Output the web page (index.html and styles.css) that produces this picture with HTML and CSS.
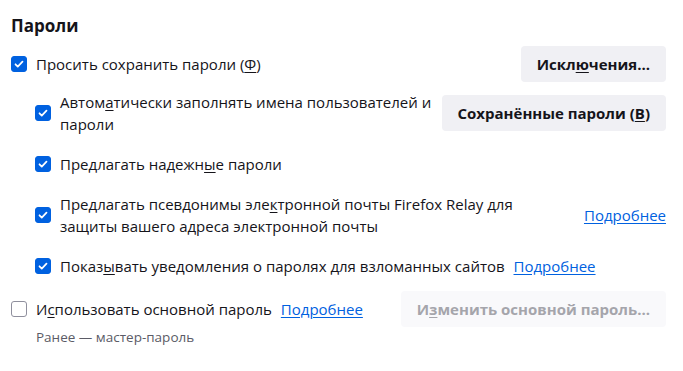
FILE: index.html
```html
<!DOCTYPE html>
<html lang="ru">
<head>
    <meta charset="UTF-8">
    <title>Пароли</title>
    <link rel="stylesheet" href="styles.css">
</head>
<body>

<div id="passwords">
    <h1>Пароли</h1>

    <div class="row">
        <label class="check">
            <span class="box on"><svg viewBox="0 0 16 16"><path d="M4 8.3l2.6 2.6L12 5.4"/></svg></span>
            <span class="txt">Просить сохранить пароли (<u>Ф</u>)</span>
        </label>
        <button class="btn">Искл<u>ю</u>чения...</button>
    </div>

    <div class="row sub">
        <label class="check">
            <span class="box on"><svg viewBox="0 0 16 16"><path d="M4 8.3l2.6 2.6L12 5.4"/></svg></span>
            <span class="txt">Автом<u>а</u>тически заполнять имена пользователей и пароли</span>
        </label>
        <button class="btn">Сохранённые пароли (<u>В</u>)</button>
    </div>

    <div class="row sub">
        <label class="check">
            <span class="box on"><svg viewBox="0 0 16 16"><path d="M4 8.3l2.6 2.6L12 5.4"/></svg></span>
            <span class="txt">Предлагать надежн<u>ы</u>е пароли</span>
        </label>
    </div>

    <div class="row sub">
        <label class="check">
            <span class="box on"><svg viewBox="0 0 16 16"><path d="M4 8.3l2.6 2.6L12 5.4"/></svg></span>
            <span class="txt relay">Предлагать псевдонимы эле<u>к</u>тронной почты Firefox Relay для защиты вашего адреса электронной почты</span>
        </label>
        <a class="more" href="#">Подробнее</a>
    </div>

    <div class="row sub">
        <label class="check">
            <span class="box on"><svg viewBox="0 0 16 16"><path d="M4 8.3l2.6 2.6L12 5.4"/></svg></span>
            <span class="txt">Показ<u>ы</u>вать уведомления о паролях для взломанных сайтов <a class="more" href="#">Подробнее</a></span>
        </label>
    </div>

    <div class="row last">
        <label class="check">
            <span class="box"></span>
            <span class="txt">И<u>с</u>пользовать основной пароль <a class="more" href="#">Подробнее</a></span>
        </label>
        <button class="btn off" disabled>И<u>з</u>менить основной пароль...</button>
    </div>
    <p class="note">Ранее — мастер-пароль</p>
</div>

</body>
</html>
```

FILE: styles.css
```css
body {
    margin: 0;
    background: #fff;
    color: #15141a;
    font-family: "Open Sans", "Noto Sans", sans-serif;
    font-size: 15px;
}
#passwords {
    padding: 14px 17px 0 11px;
}
h1 {
    font-size: 17px;
    font-weight: 700;
    margin: 0 0 8px 0;
    line-height: 24px;
}
u { text-decoration-thickness: 1px; text-underline-offset: 2px; }

.row {
    display: flex;
    align-items: center;
    justify-content: space-between;
    min-height: 36px;
}
.row + .row { margin-top: 9px; }
.row.sub { padding-left: 24px; }
.row.sub + .row.sub { margin-top: 7px; min-height: 44px; }
.row.last { margin-top: 3px; }

.check {
    display: flex;
    align-items: center;
    line-height: 22px;
}
.box {
    flex: none;
    width: 16px;
    height: 16px;
    box-sizing: border-box;
    border: 1px solid #8f8f9d;
    border-radius: 3px;
    margin-right: 9px;
}
.box.on {
    background: #0061e0;
    border-color: #0061e0;
}
.box svg {
    display: block;
    width: 14px;
    height: 14px;
    fill: none;
    stroke: #fff;
    stroke-width: 2;
    stroke-linecap: round;
    stroke-linejoin: round;
}
.txt.relay { max-width: 470px; }

.btn {
    flex: none;
    font-family: inherit;
    font-size: 15px;
    font-weight: 700;
    color: #15141a;
    background: #f0f0f4;
    border: none;
    border-radius: 4px;
    height: 36px;
    padding: 0 16px;
    margin-left: 8px;
}
.btn.off {
    background: #f9f9fb;
    color: #a5a5ab;
}
.more {
    color: #0061e0;
    margin-left: 5px;
    text-underline-offset: 2px;
}
.note {
    margin: 1px 0 0 25px;
    color: #5b5b66;
    font-size: 13.5px;
}
```
